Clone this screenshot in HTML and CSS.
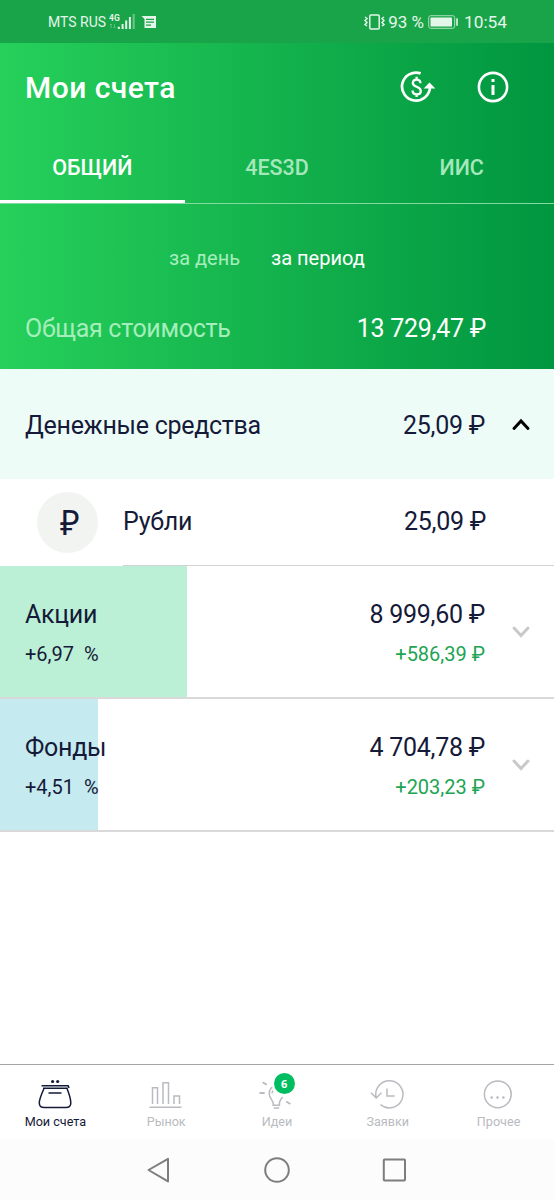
FILE: index.html
```html
<!DOCTYPE html>
<html lang="ru">
<head>
    <meta charset="UTF-8" />
    <meta name="viewport" content="width=device-width, initial-scale=1" />
    <title>Мои счета</title>
    <link rel="stylesheet" href="styles.css">
</head>
<body>
    <div class="status-bar">
        <span class="carrier">MTS RUS</span>
        <svg class="signal" width="26" height="18" viewBox="0 0 26 18">
            <text x="0" y="8" class="net-type">4G</text>
            <path d="M2 11v4M1 12l1-1 1 1M5.500 11v4M4.500 14l1 1 1-1" class="net-arrows" />
            <path d="M9.800 16v-2.200M13.600 16V11M17.200 16V7.500M20.900 16V4" class="bars" />
            <path d="M24.700 16V1" class="bars faint" />
        </svg>
        <svg class="message" width="16" height="14" viewBox="0 0 16 14">
            <path d="M.5 1h14.500v12H3.500V4z" fill="#e4f5e9" />
            <path d="M5 4.300h8M5 7.200h8M5 10.100h5" stroke="#1aa449" stroke-width="1.200" />
        </svg>
        <svg class="vibrate" width="21" height="18" viewBox="0 0 21 18">
            <rect x="5.800" y="2" width="9.400" height="14" rx="1" />
            <path d="M1 4l2 1.500L1 7.500 3 9.500l-2 2 2 1.500M20 4l-2 1.500 2 2-2 2 2 2-2 1.500" />
        </svg>
        <span class="charge">93 %</span>
        <svg class="battery" width="31" height="16" viewBox="0 0 31 16">
            <rect x=".7" y="1.700" width="26" height="12.600" rx="2" fill="none" stroke="#a9dfba" stroke-width="1" />
            <rect x="2.500" y="3.400" width="21.500" height="9.200" rx=".6" fill="#e4f5e9" />
            <rect x="28.200" y="4.300" width="1.600" height="7.400" rx=".5" fill="#e4f5e9" />
        </svg>
        <span class="clock">10:54</span>
    </div>

    <header class="header">
        <div class="title-row">
            <h1>Мои счета</h1>
            <svg class="icon-money" width="36" height="34" viewBox="0 0 36 34">
                <path d="M20.600 3.400A14 14 0 1 0 30 17" fill="none" stroke="#fff" stroke-width="2.700" />
                <path d="M29.500 12.500l5.800 6H23.700z" fill="#fff" />
                <path d="M20.400 13.200c0-2.200-1.500-3.600-3.800-3.600-2.200 0-3.800 1.300-3.800 3.300 0 4.800 8 2.900 8 8 0 2-1.700 3.400-4 3.400-2.500 0-4.200-1.500-4.200-3.800M16.600 6.800v3M16.600 24v3" fill="none" stroke="#fff" stroke-width="2.300" />
            </svg>
            <svg class="icon-info" width="32" height="32" viewBox="0 0 32 32">
                <circle cx="16" cy="16" r="14.100" fill="none" stroke="#fff" stroke-width="2.600" />
                <path d="M16 8v3M16 14v10" stroke="#fff" stroke-width="3" />
            </svg>
        </div>
        <nav class="tabs">
            <a class="tab active">ОБЩИЙ</a>
            <a class="tab">4ES3D</a>
            <a class="tab">ИИС</a>
        </nav>
        <div class="period">
            <span class="day">за день</span>
            <span class="range">за период</span>
        </div>
        <div class="total">
            <span class="total-label">Общая стоимость</span>
            <span class="total-value">13 729,47 ₽</span>
        </div>
    </header>

    <main class="accounts">
        <section class="group cash">
            <span class="name">Денежные средства</span>
            <span class="amount">25,09 ₽</span>
            <svg class="chevron open" width="20" height="14" viewBox="0 0 20 14">
                <path d="M3 10.500l7-7.500 7 7.500" />
            </svg>
        </section>
        <section class="currency">
            <span class="coin">₽</span>
            <div class="currency-row">
                <span class="name">Рубли</span>
                <span class="amount">25,09 ₽</span>
            </div>
        </section>
        <section class="group asset">
            <div class="share stocks"></div>
            <div class="asset-info">
                <span class="name">Акции</span>
                <span class="percent">+6,97&nbsp; %</span>
            </div>
            <div class="asset-sum">
                <span class="amount">8 999,60 ₽</span>
                <span class="profit">+586,39 ₽</span>
            </div>
            <svg class="chevron" width="20" height="14" viewBox="0 0 20 14">
                <path d="M3 3l7 7.500 7-7.500" />
            </svg>
        </section>
        <section class="group asset">
            <div class="share funds"></div>
            <div class="asset-info">
                <span class="name">Фонды</span>
                <span class="percent">+4,51&nbsp; %</span>
            </div>
            <div class="asset-sum">
                <span class="amount">4 704,78 ₽</span>
                <span class="profit">+203,23 ₽</span>
            </div>
            <svg class="chevron" width="20" height="14" viewBox="0 0 20 14">
                <path d="M3 3l7 7.500 7-7.500" />
            </svg>
        </section>
    </main>

    <nav class="bottom-nav">
        <a class="nav-item current">
            <svg width="36" height="32" viewBox="0 0 36 32">
                <path d="M4.500 7.700h26.700l.8 2.200M6 10.200h24.800" />
                <path d="M7 10.500C4.500 16 2.300 21 2.300 25c0 3 1.700 4.600 5 4.600h21.500c3.300 0 5-1.600 5-4.600 0-4-1.600-9-3.800-14.500M11.500 15h13" />
                <circle cx="15.600" cy="3.500" r="1.600" class="dot" />
                <circle cx="20.700" cy="3.500" r="1.600" class="dot" />
            </svg>
            <span>Мои счета</span>
        </a>
        <a class="nav-item">
            <svg width="36" height="32" viewBox="0 0 36 32">
                <path d="M4.500 26V9.800h5V26M15 26V4.800h5.500V26M26 26v-8h5.500v8M1.500 29.300h32" />
            </svg>
            <span>Рынок</span>
        </a>
        <a class="nav-item">
            <svg width="36" height="32" viewBox="0 0 36 32">
                <path d="M3.600 4.300l4.200 2.500M.5 15h5.200M27.200 23.500l4.200 2.500" stroke-width="1.900" />
                <path d="M14.500 26.500c0-4-4.300-6-4.300-11 0-3 1.200-5 3-6.500M20.200 26.500c0-3 1.200-5 3.300-7.500M13 15.500c0-1 .5-2 1.200-2.700M13.300 27.300h8M14.700 30h5.500" />
            </svg>
            <b class="badge">6</b>
            <span>Идеи</span>
        </a>
        <a class="nav-item">
            <svg width="36" height="32" viewBox="0 0 36 32">
                <path d="M6.300 20A13.600 13.600 0 1 1 10.400 26.500M1 14.800L6.200 20l5.200-5.200M17 10.500V18h7.700" />
            </svg>
            <span>Заявки</span>
        </a>
        <a class="nav-item">
            <svg width="36" height="32" viewBox="0 0 36 32">
                <circle cx="16.800" cy="16.300" r="13.400" />
                <circle cx="10.700" cy="19.500" r="1.300" class="dot" />
                <circle cx="16.500" cy="19.500" r="1.300" class="dot" />
                <circle cx="22.400" cy="19.500" r="1.300" class="dot" />
            </svg>
            <span>Прочее</span>
        </a>
    </nav>

    <div class="system-nav">
        <svg width="28" height="28" viewBox="0 0 28 28">
            <path d="M23 2.800v22.600L3.500 14z" />
        </svg>
        <svg width="28" height="28" viewBox="0 0 28 28">
            <circle cx="14" cy="14" r="11.800" />
        </svg>
        <svg width="28" height="28" viewBox="0 0 28 28">
            <rect x="2.800" y="3.400" width="21.200" height="21.200" rx=".8" />
        </svg>
    </div>
</body>
</html>
```

FILE: styles.css
```css
* {
    box-sizing: border-box;
}
body {
    margin: 0;
    height: 1200px;
    display: flex;
    flex-direction: column;
    font-family: Roboto, "Liberation Sans", sans-serif;
    background-color: #fff;
    color: #151a38;
    white-space: nowrap;
    overflow: hidden;
}
svg {
    flex: none;
    display: block;
}

/* status bar */
.status-bar {
    height: 43px;
    padding: 1px 47px 0 48px;
    display: flex;
    align-items: center;
    background-color: #1aa449;
    color: #e4f5e9;
}
.carrier {
    font-size: 14px;
    width: 61px;
}
.net-type {
    font-size: 8.5px;
    font-weight: bold;
    fill: #e4f5e9;
}
.net-arrows {
    fill: none;
    stroke: #6cc889;
    stroke-width: 0.8;
}
.bars {
    fill: none;
    stroke: #e4f5e9;
    stroke-width: 2;
}
.faint {
    stroke: #6cc889;
}
.message {
    margin-left: 6px;
}
.vibrate {
    margin-left: auto;
    fill: none;
    stroke: #e4f5e9;
    stroke-width: 1.5;
}
.charge {
    font-size: 17px;
    margin-left: 3px;
}
.battery {
    margin-left: 4px;
}
.clock {
    font-size: 17.3px;
    margin-left: 5px;
}

/* header */
.header {
    height: 326px;
    background: linear-gradient(90deg, #26d05a 0%, #14b34d 48%, #009640 100%);
    color: #fff;
}
.title-row {
    height: 88px;
    padding: 0 45.5px 0 25px;
    display: flex;
    align-items: center;
}
h1 {
    margin: 1px auto 0 0;
    font-size: 30px;
    font-weight: 500;
    letter-spacing: 0.45px;
}
.icon-info {
    margin-left: 40.5px;
}
.tabs {
    height: 73px;
    display: flex;
    border-bottom: 1px solid #83d9a0;
}
.tab {
    flex: 1;
    height: 72px;
    line-height: 74px;
    text-align: center;
    font-size: 21.5px;
    font-weight: 500;
    color: #a5e8bb;
}
.tab.active {
    color: #fff;
    border-bottom: 3px solid #fff;
}
.period {
    height: 108px;
    padding-left: 169px;
    display: flex;
    align-items: center;
    gap: 31px;
    font-size: 20px;
}
.day,
.total-label {
    color: #a5eebc;
}
.total {
    padding: 2px 68px 0 25px;
    display: flex;
    justify-content: space-between;
    font-size: 25px;
    letter-spacing: -0.28px;
    line-height: 30px;
}

/* account list */
.group,
.currency-row {
    display: flex;
    align-items: center;
    font-size: 25px;
    letter-spacing: -0.28px;
}
.amount {
    margin-left: auto;
}
.cash {
    height: 110px;
    padding: 2px 23px 0 25px;
    background-color: #eefcf8;
}
.chevron {
    margin-left: 26px;
    fill: none;
    stroke: #c9c9c9;
    stroke-width: 3;
    stroke-linecap: round;
}
.chevron.open {
    stroke: #000;
}
.currency {
    height: 87px;
    padding-left: 37px;
    display: flex;
    align-items: center;
}
.coin {
    width: 61px;
    height: 61px;
    border-radius: 50%;
    background-color: #f2f4f2;
    font-family: "Noto Sans", sans-serif;
    font-size: 34px;
    line-height: 60px;
    text-align: center;
    padding-left: 5px;
}
.currency-row {
    flex: 1;
    height: 87px;
    margin-left: 25px;
    padding: 0 68px 1px 0;
    border-bottom: 1px solid #d2d2d2;
}
.asset {
    position: relative;
    height: 133px;
    padding: 0 23px 0 25px;
    border-bottom: 2px solid #d9d9d9;
}
/* coloured bar behind the row, width is the share of the portfolio */
.share {
    position: absolute;
    z-index: -1;
    left: 0;
    top: 0;
    height: 100%;
}
.stocks {
    width: 187px;
    background-color: #bcf0d6;
}
.funds {
    width: 98px;
    background-color: #c5ebf0;
}
.asset-info,
.asset-sum {
    padding-top: 6px;
    display: flex;
    flex-direction: column;
    gap: 9px;
    line-height: 30px;
}
.asset-sum {
    margin-left: auto;
    text-align: right;
}
.percent,
.profit {
    font-size: 20px;
    letter-spacing: 0;
}
.profit {
    color: #21a453;
}

/* app navigation */
.bottom-nav {
    margin-top: auto;
    height: 75px;
    display: flex;
    border-top: 1px solid #a5a5a5;
}
.nav-item {
    position: relative;
    flex: 1;
    padding-top: 13px;
    display: flex;
    flex-direction: column;
    align-items: center;
    font-size: 12.6px;
    line-height: 23px;
    color: #b9bbc0;
}
.nav-item svg {
    fill: none;
    stroke: currentColor;
    stroke-width: 1.5;
}
.nav-item .dot {
    fill: currentColor;
    stroke: none;
}
.current {
    color: #151a38;
}
.badge {
    position: absolute;
    left: 52px;
    top: 8px;
    width: 21px;
    height: 21px;
    border-radius: 50%;
    background-color: #00bd61;
    color: #fff;
    font: bold 11px/22px "Open Sans", sans-serif;
    text-align: center;
}

/* system buttons */
.system-nav {
    height: 61px;
    padding: 0 145px;
    display: flex;
    justify-content: space-between;
    align-items: center;
    background-color: #fcfcfc;
}
.system-nav svg {
    fill: none;
    stroke: #7d7d7d;
    stroke-width: 2;
    stroke-linejoin: round;
}
```
